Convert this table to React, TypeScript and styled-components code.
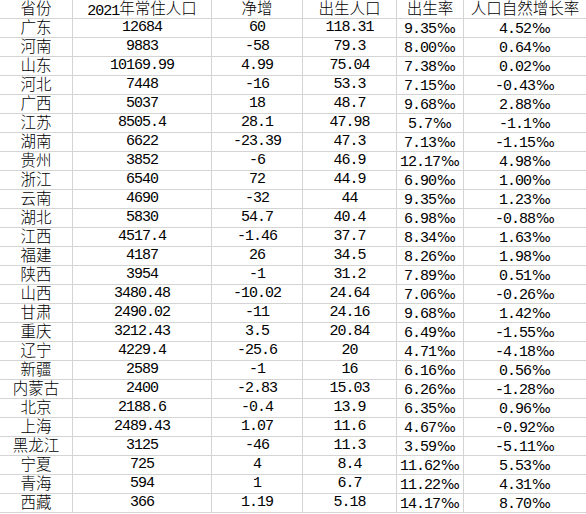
import styled, { createGlobalStyle } from "styled-components";

const GlobalStyle = createGlobalStyle`
  html, body {
    margin: 0;
    padding: 0;
    background: #ffffff;
  }
`;

type Row = [string, string, string, string, string, string];

const header: Row = ["省份", "2021年常住人口", "净增", "出生人口", "出生率", "人口自然增长率"];

const rows: Row[] = [
  ["广东", "12684", "60", "118.31", "9.35‰", "4.52‰"],
  ["河南", "9883", "-58", "79.3", "8.00‰", "0.64‰"],
  ["山东", "10169.99", "4.99", "75.04", "7.38‰", "0.02‰"],
  ["河北", "7448", "-16", "53.3", "7.15‰", "-0.43‰"],
  ["广西", "5037", "18", "48.7", "9.68‰", "2.88‰"],
  ["江苏", "8505.4", "28.1", "47.98", "5.7‰", "-1.1‰"],
  ["湖南", "6622", "-23.39", "47.3", "7.13‰", "-1.15‰"],
  ["贵州", "3852", "-6", "46.9", "12.17‰", "4.98‰"],
  ["浙江", "6540", "72", "44.9", "6.90‰", "1.00‰"],
  ["云南", "4690", "-32", "44", "9.35‰", "1.23‰"],
  ["湖北", "5830", "54.7", "40.4", "6.98‰", "-0.88‰"],
  ["江西", "4517.4", "-1.46", "37.7", "8.34‰", "1.63‰"],
  ["福建", "4187", "26", "34.5", "8.26‰", "1.98‰"],
  ["陕西", "3954", "-1", "31.2", "7.89‰", "0.51‰"],
  ["山西", "3480.48", "-10.02", "24.64", "7.06‰", "-0.26‰"],
  ["甘肃", "2490.02", "-11", "24.16", "9.68‰", "1.42‰"],
  ["重庆", "3212.43", "3.5", "20.84", "6.49‰", "-1.55‰"],
  ["辽宁", "4229.4", "-25.6", "20", "4.71‰", "-4.18‰"],
  ["新疆", "2589", "-1", "16", "6.16‰", "0.56‰"],
  ["内蒙古", "2400", "-2.83", "15.03", "6.26‰", "-1.28‰"],
  ["北京", "2188.6", "-0.4", "13.9", "6.35‰", "0.96‰"],
  ["上海", "2489.43", "1.07", "11.6", "4.67‰", "-0.92‰"],
  ["黑龙江", "3125", "-46", "11.3", "3.59‰", "-5.11‰"],
  ["宁夏", "725", "4", "8.4", "11.62‰", "5.53‰"],
  ["青海", "594", "1", "6.7", "11.22‰", "4.31‰"],
  ["西藏", "366", "1.19", "5.18", "14.17‰", "8.70‰"],
];

const Sheet = styled.div`
  width: 586px;
  display: flex;
  flex-direction: column;
  color: #000000;
  background: #ffffff;
`;

const Line = styled.div`
  display: grid;
  grid-template-columns: 73px 139px 91px 94px 67px 122px;
  height: 19px;
  box-sizing: border-box;
  border-bottom: 1px solid #d4d4d4;
`;

const Cell = styled.div`
  box-sizing: border-box;
  border-right: 1px solid #d4d4d4;
  white-space: nowrap;
  overflow: hidden;
  text-align: center;
  font-family: "Liberation Mono", monospace;
  font-size: 15px;
  line-height: 18px;
  height: 18px;

  &:last-child {
    border-right: none;
  }
`;

const Han = styled.span`
  font-family: "Noto Sans CJK SC", sans-serif;
  font-weight: 300;
  font-size: 15.5px;
  line-height: 16px;
  position: relative;
  top: -1px;
`;

const Num = styled.span`
  letter-spacing: -1px;
`;

const PerMille = styled.span`
  font-family: "DejaVu Sans", sans-serif;
  font-size: 14px;
  margin-left: 1px;
`;

// split into runs of han / latin so each gets its own font
const renderText = (text: string) => {
  const parts = text.match(/[\u4e00-\u9fff]+|‰|[^\u4e00-\u9fff‰]+/g) ?? [];
  return parts.map((p, i) => {
    if (p === "‰") return <PerMille key={i}>‰</PerMille>;
    if (/[\u4e00-\u9fff]/.test(p)) return <Han key={i}>{p}</Han>;
    return <Num key={i}>{p}</Num>;
  });
};

const TableRow = ({ cells }: { cells: Row }) => (
  <Line>
    {cells.map((c, i) => (
      <Cell key={i}>{renderText(c)}</Cell>
    ))}
  </Line>
);

export default function App() {
  return (
    <>
      <GlobalStyle />
      <Sheet>
        <TableRow cells={header} />
        {rows.map((r) => (
          <TableRow key={r[0]} cells={r} />
        ))}
      </Sheet>
    </>
  );
}
